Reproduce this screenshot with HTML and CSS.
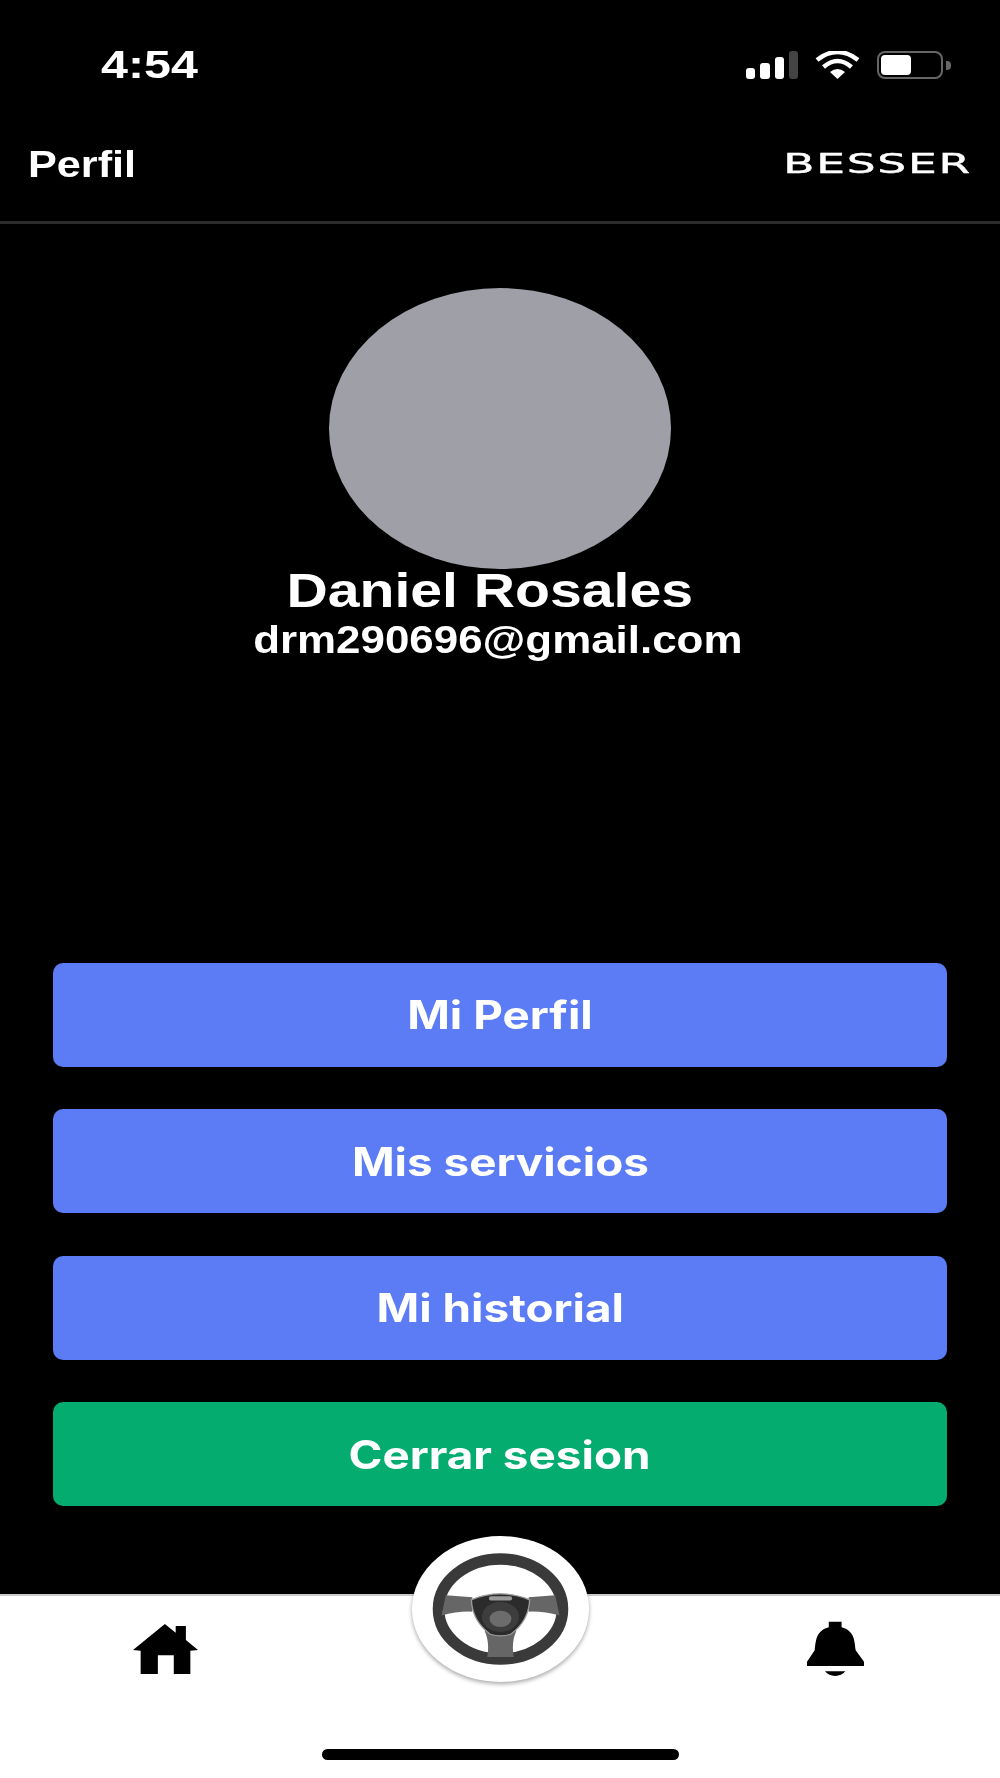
FILE: index.html
```html
<!DOCTYPE html>
<html lang="es">
<head>
  <meta charset="UTF-8">
  <title>Perfil</title>
  <link rel="stylesheet" href="styles.css">
</head>
<body>
  <div class="screen">

    <div class="status-bar">
      <span class="time">4:54</span>
      <div class="status-icons">
        <svg class="signal" viewBox="0 0 52 28">
          <rect x="0" y="17" width="9" height="11" rx="3" fill="#fff"/>
          <rect x="14" y="12" width="10" height="16" rx="3" fill="#fff"/>
          <rect x="29" y="6" width="9" height="22" rx="3" fill="#fff"/>
          <rect x="43" y="0" width="9" height="28" rx="3" fill="#444"/>
        </svg>
        <svg class="wifi" viewBox="0 0 45 28">
          <path d="M2 9 Q22.5 -7 43 9" fill="none" stroke="#fff" stroke-width="4.5"/>
          <path d="M8.500 16 Q22.5 4 36.500 16" fill="none" stroke="#fff" stroke-width="4.5"/>
          <path d="M15 21 Q22.5 15 30 21 L22.500 28 Z" fill="#fff"/>
        </svg>
        <div class="battery">
          <div class="battery-level"></div>
        </div>
        <div class="battery-nub"></div>
      </div>
    </div>

    <header class="top-bar">
      <h1 class="title">Perfil</h1>
      <span class="logo">BESSER</span>
    </header>

    <main class="content">
      <section class="profile">
        <div class="avatar"></div>
        <div class="name">Daniel Rosales</div>
        <div class="email">drm290696@gmail.com</div>
      </section>

      <section class="actions">
        <button class="btn"><span>Mi Perfil</span></button>
        <button class="btn"><span>Mis servicios</span></button>
        <button class="btn"><span>Mi historial</span></button>
        <button class="btn btn-green"><span>Cerrar sesion</span></button>
      </section>
    </main>

    <nav class="tab-bar">
      <div class="tab-icons">
        <svg class="icon-home" viewBox="208 372 102 150" preserveAspectRatio="none">
          <polygon fill="#000" points="258,372 275,398 275,378 291,378 291,420 310,450 298,452 298,522 272,522 272,466 247,466 247,522 220,522 220,452 208,450"/>
        </svg>
        <svg class="icon-bell" viewBox="1266 362 89 166" preserveAspectRatio="none">
          <path fill="#000" d="M1300 364 H1320 V381 C1340 392 1340 420 1342 450 L1355 485 V498 H1266 V485 L1278 450 C1280 420 1280 392 1300 381 Z"/>
          <path fill="#000" d="M1294 514 H1326 Q1320 528 1310 528 Q1300 528 1294 514 Z"/>
        </svg>
      </div>
      <div class="home-bar"></div>

      <div class="wheel-btn">
        <svg class="wheel" viewBox="33 42 534 444" preserveAspectRatio="none">
          <ellipse cx="300" cy="264" rx="187" ry="152" fill="none" stroke="#3a3a3a" stroke-width="35"/>
          <path d="M135 222 L215 228 L215 272 Q170 270 122 284 Z" fill="#666"/>
          <path d="M465 222 L385 228 L385 272 Q430 270 478 284 Z" fill="#666"/>
          <path d="M252 330 H348 Q332 365 340 410 H260 Q268 365 252 330 Z" fill="#666"/>
          <path d="M212 236 Q300 200 388 236 Q385 300 332 340 Q300 352 268 340 Q215 300 212 236 Z" fill="#2b2b2b" stroke="#9a9a9a" stroke-width="4"/>
          <ellipse cx="300" cy="288" rx="56" ry="46" fill="#3d3d3d"/>
          <ellipse cx="300" cy="294" rx="33" ry="25" fill="#6c6c6c"/>
          <rect x="265" y="225" width="70" height="13" rx="6" fill="#9a9a9a"/>
        </svg>
      </div>
    </nav>

  </div>
</body>
</html>
```

FILE: styles.css
```css
* {
  box-sizing: border-box;
}

body {
  margin: 0;
  background: #000;
  font-family: "Liberation Sans", Arial, sans-serif;
  color: #fff;
}

.screen {
  width: 1000px;
  height: 1778px;
  display: flex;
  flex-direction: column;
  overflow: hidden;
}

.status-bar {
  height: 110px;
  display: flex;
  justify-content: space-between;
  align-items: flex-start;
  padding: 51px 49px 0 101px;
}

.time {
  display: inline-block;
  font-size: 39px;
  line-height: 28px;
  font-weight: bold;
  transform: scaleX(1.24);
  transform-origin: left;
}

.status-icons {
  display: flex;
  align-items: flex-start;
}

.signal {
  width: 52px;
  height: 28px;
  margin-right: 17px;
}

.wifi {
  width: 45px;
  height: 28px;
  margin-right: 17px;
}

.battery {
  width: 66px;
  height: 28px;
  border: 2.500px solid #666;
  border-radius: 8px;
  padding: 2px;
}

.battery-level {
  width: 30px;
  height: 100%;
  background: #fff;
  border-radius: 4px;
}

.battery-nub {
  width: 5px;
  height: 9px;
  margin: 10px 0 0 3px;
  background: #666;
  border-radius: 0 4px 4px 0;
}

.top-bar {
  height: 114px;
  display: flex;
  justify-content: space-between;
  align-items: center;
  padding: 0 28px 4px;
  border-bottom: 3px solid #2c2c2c;
}

.title {
  margin: 2px 0 0;
  font-size: 36px;
  line-height: 40px;
  font-weight: bold;
  transform: scaleX(1.2);
  transform-origin: left;
}

.logo {
  font-family: "DejaVu Sans", sans-serif;
  font-size: 26px;
  line-height: 30px;
  letter-spacing: 1px;
  -webkit-text-stroke: 0.4px #fff;
  transform: scaleX(1.75);
  transform-origin: right;
}

.content {
  flex: 1;
  display: flex;
  flex-direction: column;
  justify-content: space-between;
  padding: 64px 53px 88px;
}

.profile {
  display: flex;
  flex-direction: column;
  align-items: center;
}

.avatar {
  width: 342px;
  height: 281px;
  border-radius: 50%;
  background: #9e9fa7;
}

.name {
  margin: -4px 20px 0 0;
  font-size: 48px;
  line-height: 52px;
  font-weight: bold;
  transform: scaleX(1.19);
}

.email {
  margin: 0 4px 0 0;
  font-size: 38px;
  line-height: 46px;
  font-weight: bold;
  transform: scaleX(1.155);
}

.actions {
  display: flex;
  flex-direction: column;
  gap: 42.500px;
}

.btn {
  height: 104px;
  border: 0;
  border-radius: 10px;
  background: #5b7cf5;
  color: #fff;
  font-family: Inter, sans-serif;
  font-size: 39px;
  font-weight: 700;
}

.btn span {
  display: inline-block;
  transform: scaleX(1.175);
}

.btn-green {
  background: #05ac6f;
}

.tab-bar {
  position: relative;
  height: 184px;
  background: #fff;
  border-top: 2px solid #ccc;
}

.tab-icons {
  display: flex;
  justify-content: space-between;
  align-items: flex-start;
  padding: 25px 136px 0 133px;
}

.icon-home {
  width: 65px;
  height: 50px;
  margin-top: 3px;
}

.icon-bell {
  width: 57px;
  height: 55px;
}

.home-bar {
  width: 357px;
  height: 11px;
  margin: 73px auto 0 322px;
  background: #000;
  border-radius: 6px;
}

.wheel-btn {
  position: absolute;
  left: 412px;
  top: -60px;
  width: 177px;
  height: 146px;
  border-radius: 50%;
  background: #fff;
  box-shadow: 0 2px 4px rgba(0, 0, 0, 0.35);
}

.wheel {
  display: block;
  width: 177px;
  height: 146px;
  filter: blur(0.6px);
}
```
